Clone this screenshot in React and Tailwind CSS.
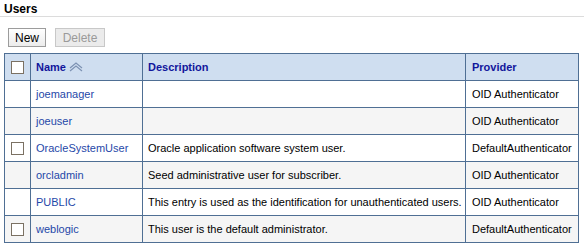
import React from 'react';

const users = [
  { name: 'joemanager', desc: '', provider: 'OID Authenticator', check: false },
  { name: 'joeuser', desc: '', provider: 'OID Authenticator', check: false },
  { name: 'OracleSystemUser', desc: 'Oracle application software system user.', provider: 'DefaultAuthenticator', check: true },
  { name: 'orcladmin', desc: 'Seed administrative user for subscriber.', provider: 'OID Authenticator', check: false },
  { name: 'PUBLIC', desc: 'This entry is used as the identification for unauthenticated users.', provider: 'OID Authenticator', check: false },
  { name: 'weblogic', desc: 'This user is the default administrator.', provider: 'DefaultAuthenticator', check: true },
];

function Box() {
  return <span className="block w-[13px] h-[13px] border border-[#7b7163] bg-white mx-auto" />;
}

function SortIcon() {
  return (
    <svg width="14" height="10" viewBox="0 0 14 10" className="inline-block ml-[3px] -mt-[2px]">
      <path d="M1 6 L7 1 L13 6" fill="none" stroke="#7d92b3" strokeWidth="1.2" />
      <path d="M1 9 L7 4 L13 9" fill="none" stroke="#7d92b3" strokeWidth="1.2" />
    </svg>
  );
}

export default function App() {
  return (
    <div className="w-[584px] h-[246px] bg-white text-[11px] text-black" style={{ fontFamily: '"Liberation Sans", Arial, sans-serif' }}>
      <div className="px-[4px] pt-[2px] h-[17px] border-b border-[#dcdcdc] font-bold text-[12px] leading-[14px]">Users</div>
      <div className="flex gap-[9px] pl-[8px] pt-[11px]">
        <button className="w-[38px] h-[19px] border border-[#9c9c9c] bg-gradient-to-b from-white to-[#ececec] text-[12px] leading-none text-black">New</button>
        <button className="w-[50px] h-[19px] border border-[#c8c8c8] bg-[#ebebeb] text-[12px] leading-none text-[#9a9a9a]">Delete</button>
      </div>
      <table className="ml-[4px] mt-[6px] w-[575px] border-collapse border border-[#4f6f94]">
        <thead>
          <tr className="h-[27px] bg-[#cfdef0]">
            <th className="w-[26px] border border-[#4f6f94] p-0"><Box /></th>
            <th className="w-[112px] border border-[#4f6f94] pl-[5px] text-left text-[#12169c] font-bold">Name<SortIcon /></th>
            <th className="w-[323px] border border-[#4f6f94] pl-[5px] text-left text-[#12169c] font-bold">Description</th>
            <th className="border border-[#4f6f94] pl-[6px] text-left text-[#12169c] font-bold">Provider</th>
          </tr>
        </thead>
        <tbody>
          {users.map((u, i) => (
            <tr key={u.name} className={`h-[27px] ${i % 2 ? 'bg-[#f5f5f5]' : 'bg-white'}`}>
              <td className="border border-[#4f6f94] p-0">{u.check && <Box />}</td>
              <td className="border border-[#4f6f94] pl-[5px] text-[#1f48a8]">{u.name}</td>
              <td className="border border-[#4f6f94] pl-[5px] whitespace-nowrap">{u.desc}</td>
              <td className="border border-[#4f6f94] pl-[6px] whitespace-nowrap">{u.provider}</td>
            </tr>
          ))}
        </tbody>
      </table>
    </div>
  );
}
